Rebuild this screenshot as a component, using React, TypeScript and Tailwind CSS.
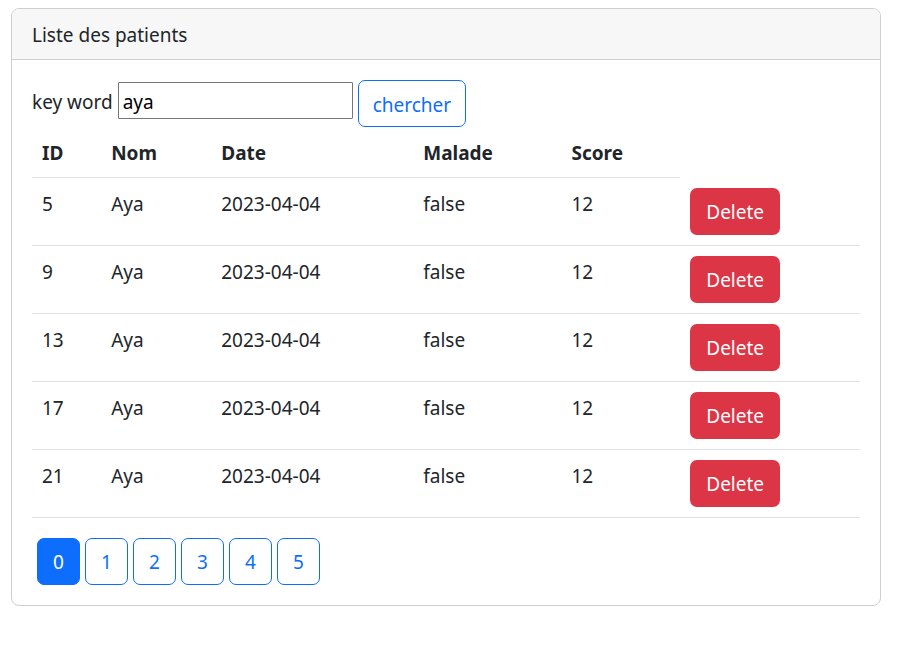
import React from "react";

const patients = [5, 9, 13, 17, 21].map((id) => ({
  id,
  nom: "Aya",
  date: "2023-04-04",
  malade: "false",
  score: 12,
}));

const pages = [0, 1, 2, 3, 4, 5];

const columns = [
  { label: "ID", width: "w-[8.35%]" },
  { label: "Nom", width: "w-[13.3%]" },
  { label: "Date", width: "w-[24.4%]" },
  { label: "Malade", width: "w-[17.9%]" },
  { label: "Score", width: "w-[14.35%]" },
];

const cell = "border-b border-[#dee2e6] px-[10px] pt-[11px] pb-[9px] align-top";

export default function App() {
  return (
    <main className="pt-2 pr-4 pl-[11px] font-['Noto_Sans',sans-serif] text-[19px] leading-[30px] text-[#212529]">
      <section className="rounded-[8px] border border-[#cfcfcf] bg-white">
        <h1 className="rounded-t-[7px] border-b border-[#cfcfcf] bg-[#f7f7f7] px-5 pt-[11px] pb-[9px]">Liste des patients</h1>
        <div className="p-5">
          <form className="flex items-start gap-[5px]" onSubmit={(e) => e.preventDefault()}>
            <label htmlFor="keyword" className="pt-[7px]">key word</label>
            <input
              id="keyword"
              defaultValue="aya"
              className="mt-[2px] h-[37px] w-[235px] rounded-[1px] border border-[#767676] px-1 pt-[2px] text-black"
            />
            <button className="h-[47px] rounded-[7px] border border-[#0d6efd] px-[14px] pt-[2px] text-[#0d6efd]">
              chercher
            </button>
          </form>
          <table className="w-full table-fixed border-separate border-spacing-0 text-left">
            <thead>
              <tr>
                {columns.map((c) => (
                  <th key={c.label} scope="col" className={`${cell} ${c.width} font-bold`}>{c.label}</th>
                ))}
              </tr>
            </thead>
            <tbody>
              {patients.map((p) => (
                <tr key={p.id}>
                  <td className={cell}>{p.id}</td>
                  <td className={cell}>{p.nom}</td>
                  <td className={cell}>{p.date}</td>
                  <td className={cell}>{p.malade}</td>
                  <td className={cell}>{p.score}</td>
                  <td className="border-b border-[#dee2e6] p-[10px]">
                    <button className="block h-[47px] rounded-[7px] bg-[#dc3545] px-4 text-white">Delete</button>
                  </td>
                </tr>
              ))}
            </tbody>
          </table>
          <nav className="mt-5 ml-[5px] flex gap-[5px]">
            {pages.map((n) => (
              <button
                key={n}
                className={`h-[47px] w-[43px] rounded-[7px] border border-[#0d6efd] ${
                  n === 0 ? "bg-[#0d6efd] text-white" : "text-[#0d6efd]"
                }`}
              >
                {n}
              </button>
            ))}
          </nav>
        </div>
      </section>
    </main>
  );
}
